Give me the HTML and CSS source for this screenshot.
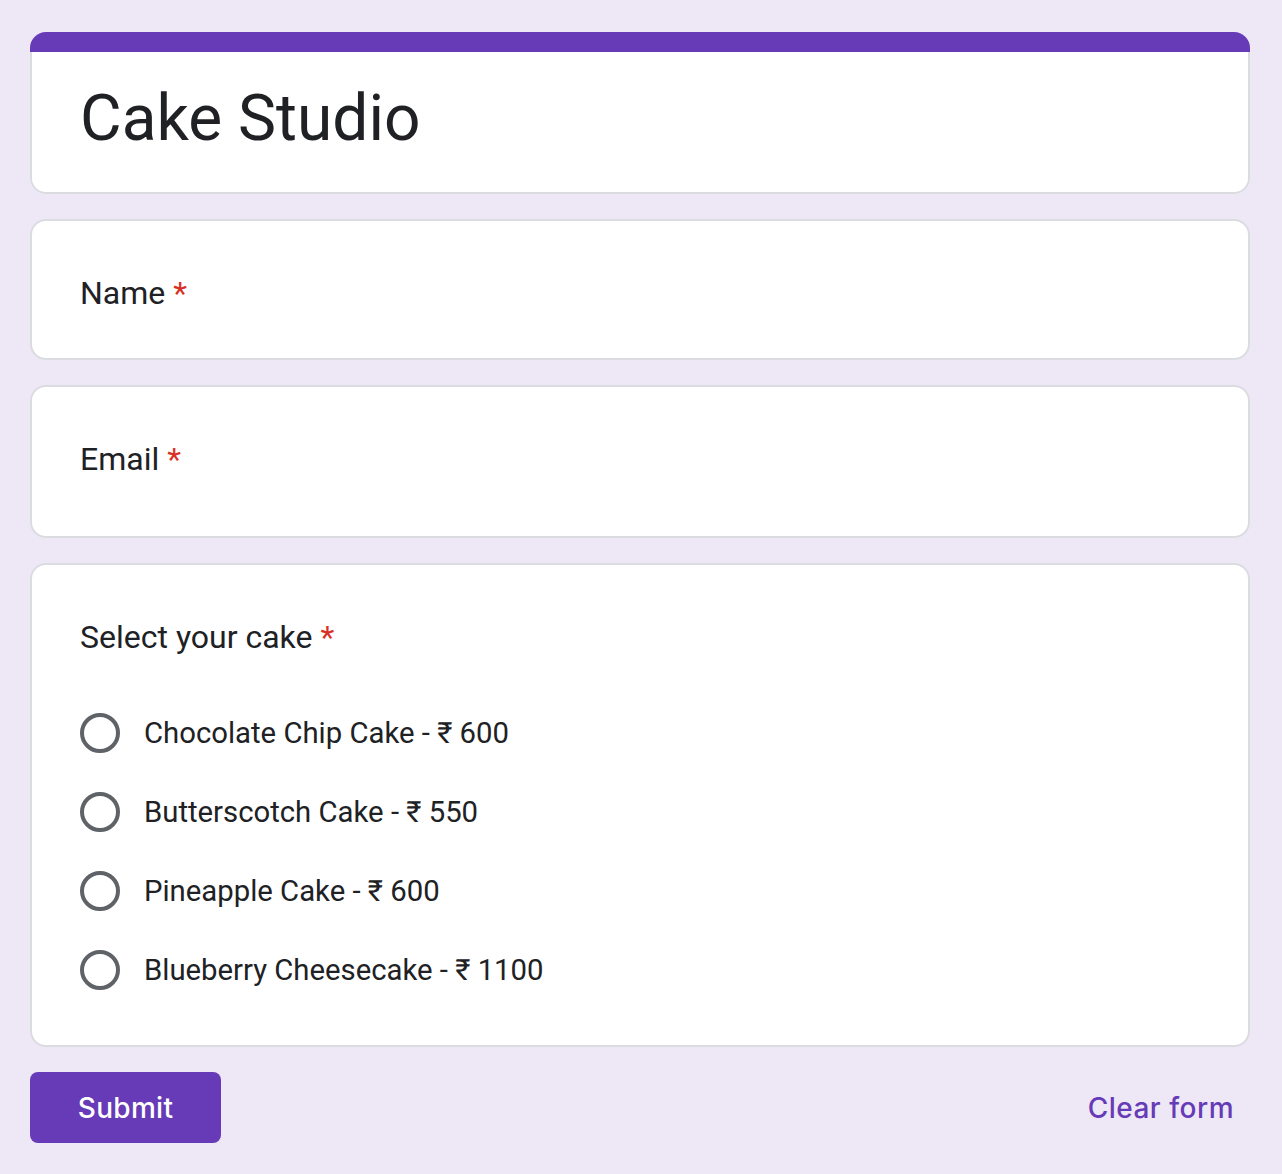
FILE: index.html
```html
<!DOCTYPE html>
<html lang="en">
<head>
<meta charset="utf-8">
<title>Cake Studio</title>
<link rel="stylesheet" href="styles.css">
</head>
<body>
<main class="form">
  <section class="title-card">
    <div class="title-bar"></div>
    <div class="title-body">
      <h1 class="title">Cake Studio</h1>
    </div>
  </section>

  <section class="card card-name">
    <div class="question">Name <span class="req">*</span></div>
  </section>

  <section class="card card-email">
    <div class="question">Email <span class="req">*</span></div>
  </section>

  <section class="card card-cake">
    <div class="question">Select your cake <span class="req">*</span></div>
    <div class="options">
      <label class="option"><span class="radio"></span><span class="opt-text">Chocolate Chip Cake - ₹ 600</span></label>
      <label class="option"><span class="radio"></span><span class="opt-text">Butterscotch Cake - ₹ 550</span></label>
      <label class="option"><span class="radio"></span><span class="opt-text">Pineapple Cake - ₹ 600</span></label>
      <label class="option"><span class="radio"></span><span class="opt-text">Blueberry Cheesecake - ₹ 1100</span></label>
    </div>
  </section>

  <div class="actions">
    <button class="submit" type="button">Submit</button>
    <button class="clear" type="button">Clear form</button>
  </div>
</main>
</body>
</html>
```

FILE: styles.css
```css
* { box-sizing: border-box; }

html, body {
  margin: 0;
  padding: 0;
  background: #ede7f6;
}

body {
  font-family: Roboto, "Liberation Sans", Arial, sans-serif;
  color: #202124;
}

.form {
  width: 1220px;
  margin: 0 0 0 30px;
  padding-top: 32px;
  display: flex;
  flex-direction: column;
  gap: 25px;
}

.title-card {
  border-radius: 16px;
  overflow: hidden;
}

.title-bar {
  height: 20px;
  background: #673ab7;
}

.title-body {
  background: #fff;
  border: 2px solid #dadce0;
  border-top: none;
  border-radius: 0 0 16px 16px;
  padding: 27px 48px 33px;
}

.title {
  margin: 0;
  font-size: 64px;
  font-weight: 400;
  line-height: 80px;
}

.card {
  background: #fff;
  border: 2px solid #dadce0;
  border-radius: 16px;
  padding: 48px 48px 0;
}

.card-name { padding-bottom: 41px; }
.card-email { padding-bottom: 53px; }
.card-cake { padding-bottom: 36px; }

.question {
  font-size: 32px;
  line-height: 48px;
  font-weight: 400;
}

.req {
  color: #d93025;
}

.options {
  margin-top: 32px;
  display: flex;
  flex-direction: column;
}

.option {
  display: flex;
  align-items: center;
  height: 79px;
  gap: 24px;
}

.radio {
  width: 40px;
  height: 40px;
  border: 4px solid #5f6368;
  border-radius: 50%;
  flex: none;
}

.opt-text {
  font-size: 29.3px;
  line-height: 40px;
}

.actions {
  display: flex;
  justify-content: space-between;
  align-items: center;
}

.submit {
  width: 191px;
  height: 71px;
  background: #673ab7;
  color: #fff;
  border: none;
  border-radius: 8px;
  font-family: Inter, "Open Sans", sans-serif;
  font-size: 28px;
  font-weight: 500;
  letter-spacing: 0.3px;
  padding: 0;
}

.clear {
  background: none;
  border: none;
  color: #673ab7;
  font-family: Inter, "Open Sans", sans-serif;
  font-size: 28px;
  font-weight: 500;
  letter-spacing: 0.5px;
  padding: 0 16px 0 0;
  margin-top: 1px;
}
```
